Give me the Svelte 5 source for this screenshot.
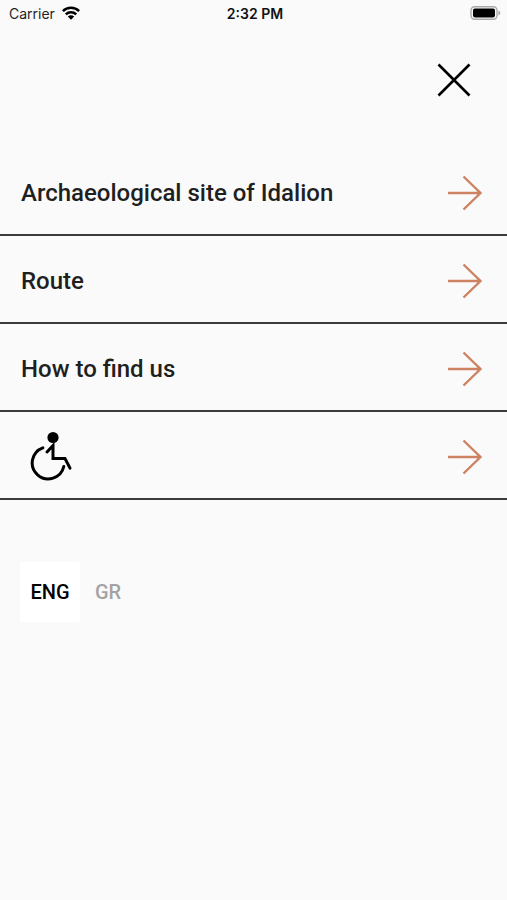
<script>
    let lang = $state("ENG");

    const languages = ["ENG", "GR"];

    const items = [
        { href: "#/site", label: "Archaeological site of Idalion" },
        { href: "#/route", label: "Route" },
        { href: "#/directions", label: "How to find us" },
        { href: "#/accessibility", icon: "wheelchair" },
    ];
</script>

<div class="status-bar">
    <div class="carrier">
        <span>Carrier</span>
        <svg width="18" height="14" viewBox="0 0 18 14" aria-hidden="true">
            <g fill="none" stroke="#000" stroke-width="2.5">
                <path d="M0.9 5.2a11.5 11.5 0 0 1 16.2 0" />
                <path d="M3.8 8.4a7.4 7.4 0 0 1 10.4 0" />
            </g>
            <path d="M5.8 10.6a4.6 4.6 0 0 1 6.4 0L9 13.8z" />
        </svg>
    </div>
    <div class="time">2:32 PM</div>
    <div class="battery">
        <svg width="31" height="14" viewBox="0 0 31 14" aria-hidden="true">
            <rect x="1" y="0.8" width="26" height="12.4" rx="3.6" fill="#fafafa" stroke="#a9a9a9" stroke-width="1.4" />
            <rect x="3" y="2.6" width="22" height="8.8" rx="1.8" />
            <path d="M28.4 4.6q2 .8 2 2.4t-2 2.4z" fill="#a9a9a9" />
        </svg>
    </div>
</div>

<header>
    <button class="close" aria-label="Close menu">
        <svg width="34" height="34" viewBox="0 0 34 34">
            <path d="M1.5 1.5l31 31M32.5 1.5l-31 31" fill="none" stroke="#000" stroke-width="2.6" />
        </svg>
    </button>
</header>

<nav>
    {#each items as item}
        <a href={item.href} aria-label={item.icon ? "Accessibility" : undefined}>
            {#if item.icon}
                <svg class="wheelchair" width="44" height="52" viewBox="0 1 44 52">
                    <circle cx="23" cy="7.5" r="5.6" />
                    <g fill="none" stroke="#000" stroke-width="3" stroke-linecap="round">
                        <path d="M17 22l6-6.5V28.5h12l5 9.6" />
                        <path d="M12.8 17.8A16 16 0 1 0 33.8 36.5" />
                    </g>
                </svg>
            {:else}
                <span>{item.label}</span>
            {/if}
            <svg class="arrow" width="36" height="36" viewBox="0 0 36 36" aria-hidden="true">
                <path d="M1 18h33M16.5 1.5L33.5 18 16.5 34.5" fill="none" stroke="#cd8261" stroke-width="2.4" />
            </svg>
        </a>
    {/each}
</nav>

<div class="languages">
    {#each languages as code}
        <button class:active={lang === code} onclick={() => (lang = code)}>{code}</button>
    {/each}
</div>

<style>
    :global(body) {
        background: #fafafa;
        font-family: Roboto, sans-serif;
        color: #1f1f1f;
    }

    .status-bar {
        display: grid;
        grid-template-columns: 1fr auto 1fr;
        align-items: center;
        height: 26px;
        padding: 0 6px 0 9px;
        font-family: Inter, sans-serif;
        font-size: 14px;
    }

    .carrier {
        display: flex;
        align-items: center;
        gap: 7px;
    }

    .time {
        font-weight: 600;
        color: #111;
    }

    .battery {
        display: flex;
        justify-content: flex-end;
    }

    header {
        display: flex;
        justify-content: flex-end;
        padding: 29px 28px 43px;
    }

    button {
        border: none;
        background: none;
        font-family: inherit;
        cursor: pointer;
    }

    .close {
        display: flex;
        padding: 8px;
    }

    nav a {
        display: flex;
        align-items: center;
        justify-content: space-between;
        box-sizing: border-box;
        height: 88px;
        padding: 4px 24px 0 21px;
        border-bottom: 2px solid #3c3a3b;
        color: inherit;
        font-size: 24px;
        font-weight: 500;
        text-decoration: none;
    }

    .wheelchair {
        margin-left: 9px;
    }

    .languages {
        display: flex;
        padding: 62px 20px;
    }

    .languages button {
        height: 60px;
        min-width: 56px;
        padding: 0 10px;
        border-radius: 3px;
        color: #a3a3a3;
        font-size: 20px;
        font-weight: 500;
    }

    .languages .active {
        min-width: 60px;
        background: #fff;
        color: #000;
    }
</style>
